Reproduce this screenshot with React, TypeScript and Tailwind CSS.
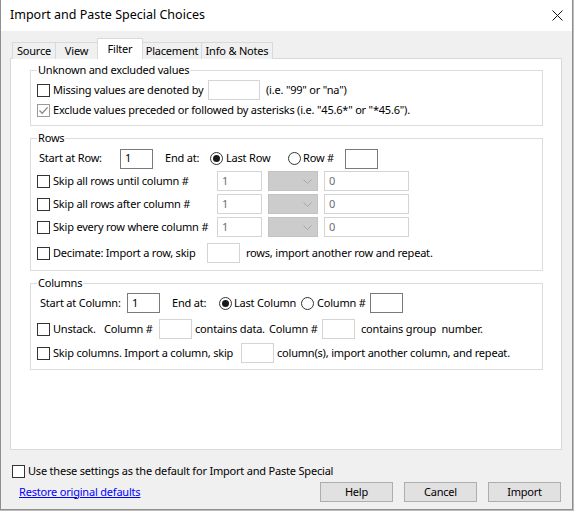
import React from "react";

function Check({ checked = false, dim = false }: { checked?: boolean; dim?: boolean }) {
  return (
    <span
      className={`inline-flex w-[13px] h-[13px] shrink-0 items-center justify-center border bg-white ${
        dim ? "border-[#9a9a9a]" : "border-[#333333]"
      }`}
    >
      {checked && (
        <svg width="11" height="11" viewBox="0 0 11 11">
          <path d="M1.5 5.5 L4.2 8.3 L9.6 2.4" fill="none" stroke="#8a8a8a" strokeWidth="1.3" />
        </svg>
      )}
    </span>
  );
}

function Radio({ on = false }: { on?: boolean }) {
  return (
    <span className="inline-flex w-[13px] h-[13px] shrink-0 items-center justify-center rounded-full border border-[#333333] bg-white">
      {on && <span className="w-[7px] h-[7px] rounded-full bg-[#1a1a1a]" />}
    </span>
  );
}

function Box({ className = "", dark = false, dim = false, value = "" }: { className?: string; dark?: boolean; dim?: boolean; value?: string }) {
  return (
    <span
      className={`inline-flex h-[20px] shrink-0 items-center border bg-white pl-[4px] ${
        dark ? "border-[#7a7a7a]" : "border-[#d4d4d4]"
      } ${dim ? "text-[#6d6d6d]" : "text-black"} ${className}`}
    >
      {value}
    </span>
  );
}

function Combo() {
  return (
    <span className="ml-[6px] inline-flex h-[20px] w-[50px] shrink-0 items-center justify-end border border-[#c2c2c2] bg-[#cccccc] pr-[5px]">
      <svg width="9" height="5" viewBox="0 0 9 5">
        <path d="M0.5 0.5 L4.5 4.5 L8.5 0.5" fill="none" stroke="#a8a8a8" strokeWidth="1" />
      </svg>
    </span>
  );
}

function SkipRow({ label }: { label: string }) {
  return (
    <div className="flex h-[20px] items-center">
      <Check />
      <span className="ml-[3px] w-[164px]">{label}</span>
      <Box className="w-[45px]" dim value="1" />
      <Combo />
      <Box className="ml-[6px] w-[85px]" dim value="0" />
    </div>
  );
}

const tabs = [
  { name: "Source", w: "w-[44px]" },
  { name: "View", w: "w-[43px]" },
  { name: "Filter", w: "w-[46px]", on: true },
  { name: "Placement", w: "w-[60px]" },
  { name: "Info & Notes", w: "w-[72px]" },
];

export default function App() {
  return (
    <div className="w-[574px] h-[511px] whitespace-nowrap bg-[#bdbdbd] font-['Noto_Sans',sans-serif] text-[11px] tracking-[-0.2px] text-black">
      <div className="flex h-[510px] w-[573px] flex-col border border-t-0 border-[#8f8f8f] bg-[#f0f0f0]">
        {/* title bar */}
        <div className="flex h-[31px] items-center justify-between bg-white pl-[9px] pr-[9px]">
          <span className="text-[12.5px] tracking-normal">Import and Paste Special Choices</span>
          <svg width="11" height="11" viewBox="0 0 11 11">
            <path d="M0.5 0.5 L10.5 10.5 M10.5 0.5 L0.5 10.5" stroke="#111" strokeWidth="1" />
          </svg>
        </div>

        <div className="flex flex-1 flex-col pl-[9px] pr-[10px] pt-[7px]">
          {/* tabs */}
          <div className="relative z-10 -mb-px ml-[2px] flex h-[21px] items-end">
            {tabs.map((t, i) => (
              <div
                key={t.name}
                className={`flex shrink-0 justify-center border border-b-0 border-[#d9d9d9] ${t.w} ${
                  i > 0 ? "-ml-px" : ""
                } ${t.on ? "relative z-10 h-[21px] items-start bg-white pt-[2px]" : "h-[17px] items-center bg-[#f0f0f0]"}`}
              >
                {t.name}
              </div>
            ))}
          </div>

          {/* panel */}
          <div className="flex h-[392px] flex-col border border-[#d9d9d9] bg-white">
            <fieldset className="ml-[19px] mr-[18px] mt-[3px] min-w-0 border border-[#dcdcdc] pb-[4px] pl-[6px]">
              <legend className="px-[1px] leading-[16px]">Unknown and excluded values</legend>
              <div className="mt-[2px] flex h-[20px] items-center">
                <Check />
                <span className="ml-[3px] w-[155px]">Missing values are denoted by</span>
                <Box className="w-[52px]" />
                <span className="ml-[6px]">(i.e. "99" or "na")</span>
              </div>
              <div className="flex h-[21px] items-center">
                <Check checked dim />
                <span className="ml-[3px]">Exclude values preceded or followed by asterisks (i.e. "45.6*" or "*45.6").</span>
              </div>
            </fieldset>

            <fieldset className="ml-[19px] mr-[18px] mt-[4px] min-w-0 border border-[#dcdcdc] pb-[7px] pl-[6px]">
              <legend className="px-[1px] leading-[16px]">Rows</legend>
              <div className="mt-[2px] flex h-[21px] items-center">
                <span className="ml-[2px] w-[81px]">Start at Row:</span>
                <Box className="w-[33px]" dark value="1" />
                <span className="ml-[12px] w-[45px]">End at:</span>
                <span className="flex w-[78px] items-center">
                  <Radio on />
                  <span className="ml-[3px]">Last Row</span>
                </span>
                <span className="flex w-[57px] items-center">
                  <Radio />
                  <span className="ml-[2px]">Row #</span>
                </span>
                <Box className="w-[33px]" dark />
              </div>
              <div className="mt-[2px] flex flex-col gap-[3px]">
                <SkipRow label="Skip all rows until column #" />
                <SkipRow label="Skip all rows after column #" />
                <SkipRow label="Skip every row where column #" />
              </div>
              <div className="mt-[6px] flex h-[20px] items-center">
                <Check />
                <span className="ml-[3px] w-[154px]">Decimate: Import a row, skip</span>
                <Box className="w-[33px]" />
                <span className="ml-[6px]">rows, import another row and repeat.</span>
              </div>
            </fieldset>

            <fieldset className="ml-[19px] mr-[18px] mt-[4px] min-w-0 border border-[#dcdcdc] pb-[6px] pl-[6px]">
              <legend className="px-[1px] leading-[16px]">Columns</legend>
              <div className="mt-[2px] flex h-[20px] items-center">
                <span className="ml-[3px] w-[87px]">Start at Column:</span>
                <Box className="w-[33px]" dark value="1" />
                <span className="ml-[12px] w-[47px]">End at:</span>
                <span className="flex w-[82px] items-center">
                  <Radio on />
                  <span className="ml-[2px]">Last Column</span>
                </span>
                <span className="flex w-[69px] items-center">
                  <Radio />
                  <span className="ml-[3px]">Column #</span>
                </span>
                <Box className="w-[33px]" dark />
              </div>
              <div className="mt-[6px] flex h-[20px] items-center">
                <Check />
                <span className="ml-[3px] w-[51px]">Unstack.</span>
                <span className="w-[55px]">Column #</span>
                <Box className="w-[33px]" />
                <span className="ml-[3px] w-[74px]">contains data.</span>
                <span className="w-[53px]">Column #</span>
                <Box className="w-[33px]" />
                <span className="ml-[6px] whitespace-pre">contains group  number.</span>
              </div>
              <div className="mt-[4px] flex h-[20px] items-center">
                <Check />
                <span className="ml-[3px] w-[188px]">Skip columns. Import a column, skip</span>
                <Box className="w-[33px]" />
                <span className="ml-[3px]">column(s), import another column, and repeat.</span>
              </div>
            </fieldset>
          </div>

          {/* footer */}
          <div className="ml-[2px] mt-[11px] flex h-[20px] items-center">
            <Check />
            <span className="ml-[3px]">Use these settings as the default for Import and Paste Special</span>
          </div>
          <div className="mt-[1px] flex items-center justify-between">
            <a className="ml-[9px] text-[#0000ff] underline" href="#">
              Restore original defaults
            </a>
            <div className="mr-[1px] flex gap-[11px]">
              {["Help", "Cancel", "Import"].map((b) => (
                <button key={b} className="flex h-[20px] w-[73px] items-center justify-center border border-[#adadad] bg-[#e1e1e1]">
                  {b}
                </button>
              ))}
            </div>
          </div>
        </div>
      </div>
    </div>
  );
}
